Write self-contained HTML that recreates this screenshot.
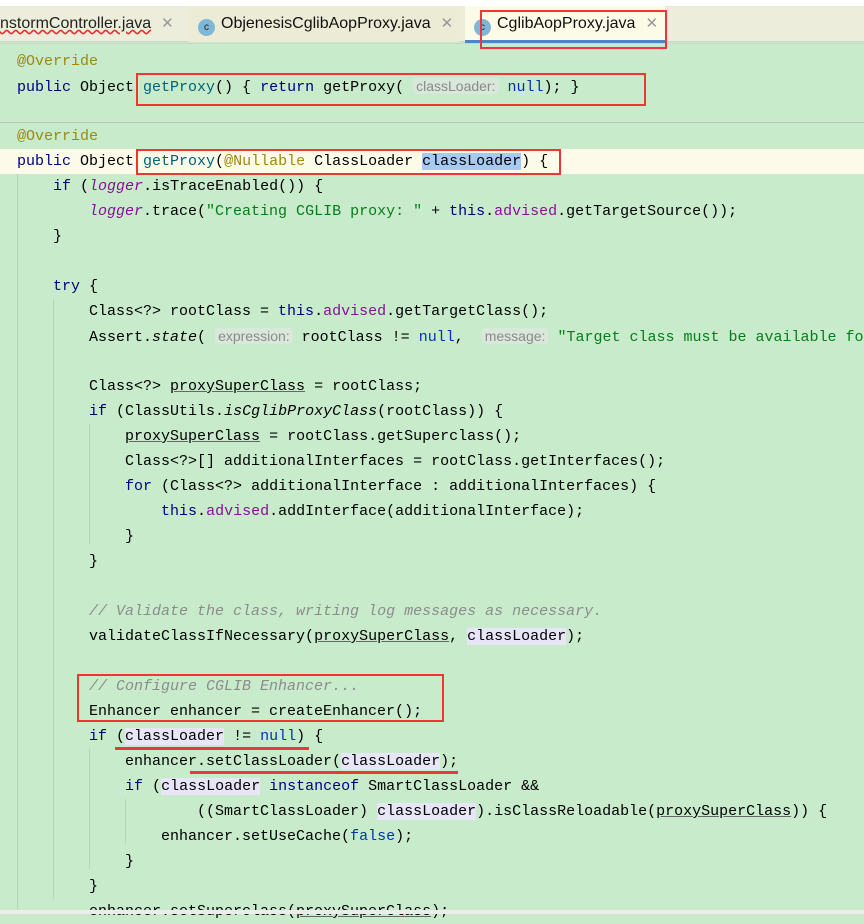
<!DOCTYPE html>
<html><head><meta charset="utf-8"><style>
*{margin:0;padding:0;box-sizing:border-box}
body{width:864px;height:914px;overflow:hidden;background:#c8ebcc;position:relative;font-family:"Liberation Mono",monospace;font-size:15px;color:#000}
.tabs{position:absolute;left:0;top:0;width:864px;height:42px;background:#ededdc;border-top:6px solid #fff;border-bottom:1px solid #c9d6c9}
.tab{position:absolute;top:12px;height:30px;font-family:"Liberation Sans",sans-serif;font-size:16px;line-height:24px;color:#111}
.x{color:#999;margin-left:10px;font-size:15px}
.ic{display:inline-block;width:17px;height:17px;border-radius:50%;background:#7fb8d6;color:#222;font-size:10px;text-align:center;line-height:17px;vertical-align:-2px;margin-right:6px}
.l{position:absolute;left:17px;height:25px;line-height:25px;white-space:pre}
.k{color:#000080}.m{color:#00627a}.a{color:#9e880d}.s{color:#067d17}.p{color:#871094}.i{font-style:italic}.c{color:#8c8c8c;font-style:italic}.n{color:#0033b3}
.h{font-family:"Liberation Sans",sans-serif;font-size:14px;color:#8a8a8a;background:#d9e8da;border-radius:4px;padding:0 3px}
.u{text-decoration:underline;text-decoration-color:#666}
.v{background:#e8e6f6}
.box{position:absolute;border:2px solid #f03535}
.g{position:absolute;width:1px;background:#b4d6b7}
</style></head><body>
<div class="tabs"></div>
<div class="tab" style="left:0;color:#222"><span style="text-decoration:underline wavy #e03030">nstormController.java</span><span class="x">✕</span></div>
<div style="position:absolute;left:188px;top:6px;width:272px;height:36px;background:#ecebd6"></div>
<div class="tab" style="left:198px"><span class="ic">c</span>ObjenesisCglibAopProxy.java<span class="x">✕</span></div>
<div style="position:absolute;left:465px;top:6px;width:200px;height:36px;background:#fbfbe8"></div>
<div style="position:absolute;left:465px;top:40px;width:200px;height:4px;background:#4a86c8"></div>
<div class="tab" style="left:474px"><span class="ic">c</span>CglibAopProxy.java<span class="x">✕</span></div>
<div style="position:absolute;left:0;top:43px;width:864px;height:1px;background:#c8d8c8"></div>
<div style="position:absolute;left:0;top:122px;width:864px;height:1px;background:#b8c8b8"></div>
<div style="position:absolute;left:0;top:149px;width:864px;height:25px;background:#fcfbe9"></div>
<div class="g" style="left:17px;top:174px;height:740px"></div>
<div class="g" style="left:53px;top:299px;height:600px"></div>
<div class="g" style="left:89px;top:424px;height:120px"></div>
<div class="g" style="left:89px;top:749px;height:120px"></div>
<div class="g" style="left:125px;top:799px;height:45px"></div>

<div class="l" style="top:49px"><span class="a">@Override</span></div>
<div class="l" style="top:74px"><span class="k">public</span> Object <span class="m">getProxy</span>() { <span class="k">return</span> getProxy( <span class="h">classLoader:</span> <span class="n">null</span>); }</div>
<div class="l" style="top:124px"><span class="a">@Override</span></div>
<div class="l" style="top:149px"><span class="k">public</span> Object <span class="m">getProxy</span>(<span class="a">@Nullable</span> ClassLoader <span style="background:#a6cbf3">classLoader</span>) {</div>
<div class="l" style="top:174px">    <span class="k">if</span> (<span class="p i">logger</span>.isTraceEnabled()) {</div>
<div class="l" style="top:199px">        <span class="p i">logger</span>.trace(<span class="s">"Creating CGLIB proxy: "</span> + <span class="k">this</span>.<span class="p">advised</span>.getTargetSource());</div>
<div class="l" style="top:224px">    }</div>
<div class="l" style="top:274px">    <span class="k">try</span> {</div>
<div class="l" style="top:299px">        Class&lt;?&gt; rootClass = <span class="k">this</span>.<span class="p">advised</span>.getTargetClass();</div>
<div class="l" style="top:324px">        Assert.<span class="i">state</span>( <span class="h">expression:</span> rootClass != <span class="n">null</span>,  <span class="h">message:</span> <span class="s">"Target class must be available for</span></div>
<div class="l" style="top:374px">        Class&lt;?&gt; <span class="u">proxySuperClass</span> = rootClass;</div>
<div class="l" style="top:399px">        <span class="k">if</span> (ClassUtils.<span class="i">isCglibProxyClass</span>(rootClass)) {</div>
<div class="l" style="top:424px">            <span class="u">proxySuperClass</span> = rootClass.getSuperclass();</div>
<div class="l" style="top:449px">            Class&lt;?&gt;[] additionalInterfaces = rootClass.getInterfaces();</div>
<div class="l" style="top:474px">            <span class="k">for</span> (Class&lt;?&gt; additionalInterface : additionalInterfaces) {</div>
<div class="l" style="top:499px">                <span class="k">this</span>.<span class="p">advised</span>.addInterface(additionalInterface);</div>
<div class="l" style="top:524px">            }</div>
<div class="l" style="top:549px">        }</div>
<div class="l" style="top:599px">        <span class="c">// Validate the class, writing log messages as necessary.</span></div>
<div class="l" style="top:624px">        validateClassIfNecessary(<span class="u">proxySuperClass</span>, <span class="v">classLoader</span>);</div>
<div class="l" style="top:674px">        <span class="c">// Configure CGLIB Enhancer...</span></div>
<div class="l" style="top:699px">        Enhancer enhancer = createEnhancer();</div>
<div class="l" style="top:724px">        <span class="k">if</span> (<span class="v">classLoader</span> != <span class="n">null</span>) {</div>
<div class="l" style="top:749px">            enhancer.setClassLoader(<span class="v">classLoader</span>);</div>
<div class="l" style="top:774px">            <span class="k">if</span> (<span class="v">classLoader</span> <span class="k">instanceof</span> SmartClassLoader &amp;&amp;</div>
<div class="l" style="top:799px">                    ((SmartClassLoader) <span class="v">classLoader</span>).isClassReloadable(<span class="u">proxySuperClass</span>)) {</div>
<div class="l" style="top:824px">                enhancer.setUseCache(<span class="n">false</span>);</div>
<div class="l" style="top:849px">            }</div>
<div class="l" style="top:874px">        }</div>
<div class="l" style="top:899px">        enhancer.setSuperclass(<span class="u">proxySuperClass</span>);</div>
<div style="position:absolute;left:0;top:910px;width:864px;height:4px;background:#ececec"></div>

<div class="box" style="left:480px;top:10px;width:187px;height:39px"></div>
<div class="box" style="left:136px;top:73px;width:510px;height:33px"></div>
<div class="box" style="left:136px;top:149px;width:425px;height:26px"></div>
<div class="box" style="left:77px;top:674px;width:367px;height:48px"></div>
<div style="position:absolute;left:115px;top:747px;width:194px;height:3px;background:#f03535"></div>
<div style="position:absolute;left:190px;top:771px;width:268px;height:3px;background:#f03535"></div>
</body></html>
